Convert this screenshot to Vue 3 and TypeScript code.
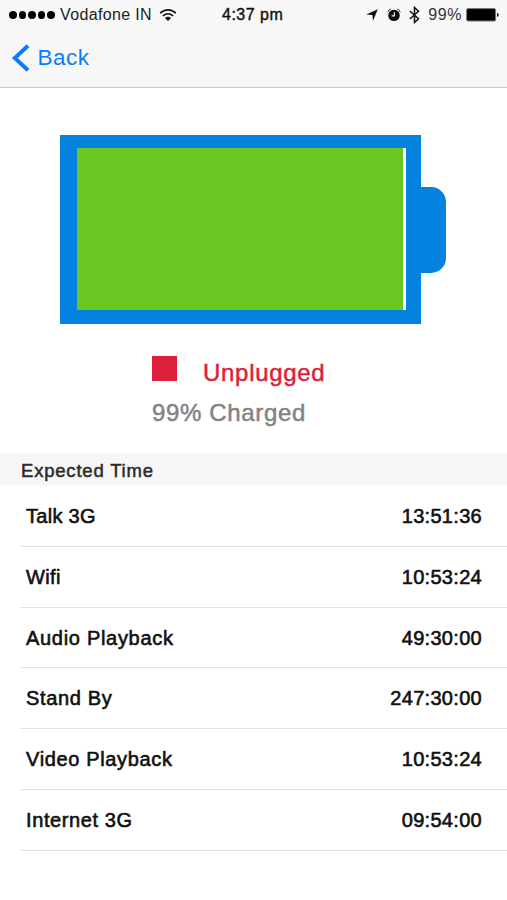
<script setup lang="ts">
interface Estimate {
  label: string
  time: string
  tracking: number
}

const charge = 99
const estimates: Estimate[] = [
  { label: 'Talk 3G', time: '13:51:36', tracking: 0.3 },
  { label: 'Wifi', time: '10:53:24', tracking: 0.4 },
  { label: 'Audio Playback', time: '49:30:00', tracking: 0.7 },
  { label: 'Stand By', time: '247:30:00', tracking: 0.65 },
  { label: 'Video Playback', time: '10:53:24', tracking: 0.65 },
  { label: 'Internet 3G', time: '09:54:00', tracking: 0.6 },
]
</script>

<template>
  <main class="screen">
    <header class="top">
      <div class="status">
        <div class="side">
          <div class="signal"><i v-for="n in 5" :key="n" class="dot"></i></div>
          <span class="carrier">Vodafone IN</span>
          <svg class="wifi" width="18" height="14" viewBox="0 0 18 14" fill="none" stroke="#111">
            <path d="M1.2 5.2C5.7.7 12.3.7 16.8 5.2" stroke-width="1.7" />
            <path d="M3.9 8C7 5 11 5 14.1 8" stroke-width="1.7" />
            <path d="M9 13 6 10C7.8 8.3 10.2 8.3 12 10Z" fill="#111" stroke="none" />
          </svg>
        </div>
        <span class="clock">4:37 pm</span>
        <div class="side end">
          <svg class="location" width="12" height="12" viewBox="0 0 12 12"><path d="M11.8.2 7 11.8 6.4 6.1.2 5.5Z" fill="#111" /></svg>
          <svg class="alarm" width="14" height="14" viewBox="0 0 14 14" fill="none">
            <circle cx="7" cy="7.4" r="5.7" fill="#0b0b0b" />
            <path d="M.8 4.1Q1.2 1.7 3.8 1M13.2 4.1Q12.8 1.7 10.2 1" stroke="#333" stroke-width="1" />
            <path d="M7.3 4.2V7.8H4.7" stroke="#f7f7f7" stroke-width="1.2" />
          </svg>
          <svg class="bluetooth" width="11" height="18" viewBox="0 0 11 18" fill="none" stroke="#111" stroke-width="1.5">
            <path d="M.8 5 9.5 12.8 5.5 16.5V1.5L9.5 5.2.8 13" />
          </svg>
          <span class="percent">{{ charge }}%</span>
          <svg class="cell" width="33" height="14" viewBox="0 0 33 14">
            <rect x=".6" y=".6" width="29" height="12.4" rx="1.5" fill="#000" stroke="#777" stroke-width="1" />
            <path d="M31 4.7Q32.8 5 32.8 6.8T31 9Z" fill="#222" />
          </svg>
        </div>
      </div>
      <nav class="nav">
        <svg width="19" height="28" viewBox="0 0 19 28" fill="none"><path d="M17 1.8 3.8 14 17 26.2" stroke="#0a7cfa" stroke-width="3.9" /></svg>
        <span class="back">Back</span>
      </nav>
    </header>

    <section class="hero">
      <div class="battery">
        <div class="shell"><div class="track"><div class="fill" :style="{ width: charge + '%' }"></div></div></div>
        <div class="cap"></div>
      </div>
      <div class="summary">
        <div class="state"><i class="marker"></i><span class="plug">Unplugged</span></div>
        <div class="charged">{{ charge }}% Charged</div>
      </div>
    </section>

    <h2 class="heading">Expected Time</h2>
    <ul class="list">
      <li v-for="item in estimates" :key="item.label" class="row">
        <span :style="{ letterSpacing: item.tracking + 'px' }">{{ item.label }}</span>
        <span class="time">{{ item.time }}</span>
      </li>
    </ul>
  </main>
</template>

<style>
body {
  margin: 0;
  background: #fff;
}
</style>

<style scoped>
.screen {
  width: 507px;
  height: 900px;
  overflow: hidden;
  background: #fff;
  color: #111;
  font-family: "Liberation Sans", Arial, sans-serif;
}
.top {
  box-sizing: border-box;
  height: 88px;
  background: #f7f7f7;
  border-bottom: 1px solid #c8c8c8;
}
.status {
  display: grid;
  grid-template-columns: 213px auto 1fr;
  align-items: center;
  height: 30px;
  padding: 0 8px 0 9px;
  font-size: 16px;
  line-height: 30px;
  white-space: nowrap;
}
.side {
  display: flex;
  align-items: center;
}
.end {
  justify-content: flex-end;
}
.signal {
  display: flex;
  gap: 1.6px;
  width: 46px;
}
.dot {
  width: 8px;
  height: 8px;
  border-radius: 50%;
  background: #000;
}
.carrier {
  margin-left: 5px;
  letter-spacing: 0.35px;
  color: #222;
}
.wifi {
  margin-left: 7px;
  margin-bottom: 1px;
}
.clock {
  letter-spacing: 0.5px;
  -webkit-text-stroke: 0.4px #111;
}
.alarm {
  margin-left: 9px;
}
.bluetooth {
  margin-left: 8px;
}
.percent {
  margin-left: 8px;
  letter-spacing: 0.6px;
  color: #333;
}
.cell {
  margin-left: 4px;
}
.nav {
  display: flex;
  align-items: center;
  gap: 7px;
  height: 55px;
  padding-left: 11px;
  color: #0a7cfa;
}
.back {
  padding-left: 0.5px;
  font-size: 22.5px;
  letter-spacing: 0.5px;
}
.hero {
  box-sizing: border-box;
  height: 365px;
  padding: 47px 0 0 60px;
}
.battery {
  display: flex;
  align-items: center;
}
.shell {
  box-sizing: border-box;
  width: 361px;
  height: 189px;
  padding: 13px 15px 14px 16.5px;
  background: #0482df;
}
.track {
  height: 100%;
  background: #fff;
}
.fill {
  height: 100%;
  background: #6ac721;
}
.cap {
  width: 25px;
  height: 86px;
  border-radius: 0 15px 15px 0;
  background: #0482df;
}
.summary {
  padding: 31.5px 0 0 92px;
  font-size: 24px;
}
.state {
  display: flex;
  gap: 26px;
  height: 40px;
  color: #dc1f3b;
}
.marker {
  width: 25px;
  height: 25px;
  background: #dc1f3b;
}
.plug {
  padding-top: 3px;
  line-height: 28px;
  letter-spacing: 0.7px;
  -webkit-text-stroke: 0.5px #dc1f3b;
}
.charged {
  padding-top: 3px;
  line-height: 28px;
  letter-spacing: 0.65px;
  color: #838383;
  -webkit-text-stroke: 0.5px #838383;
}
.heading {
  height: 33px;
  margin: 0;
  padding-left: 21px;
  background: #f7f7f7;
  color: #2b2b2b;
  font-size: 18.5px;
  font-weight: 400;
  line-height: 35px;
  letter-spacing: 0.8px;
  -webkit-text-stroke: 0.5px #2b2b2b;
}
.list {
  margin: 0;
  padding: 0 0 0 21px;
  list-style: none;
}
.row {
  box-sizing: border-box;
  display: flex;
  align-items: center;
  justify-content: space-between;
  height: 60.8px;
  padding: 1.4px 25px 0 5px;
  border-bottom: 1.5px solid #e1e1e1;
  font-size: 20px;
  -webkit-text-stroke: 0.6px #111;
}
.time {
  letter-spacing: 0.3px;
}
</style>
